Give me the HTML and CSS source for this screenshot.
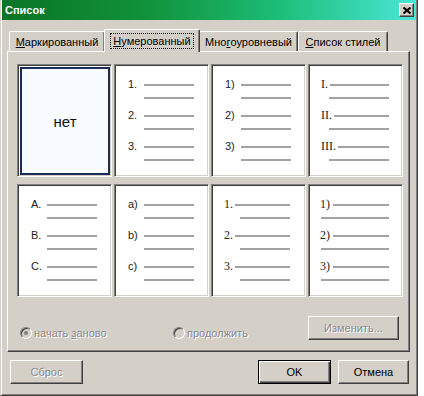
FILE: index.html
```html
<!DOCTYPE html>
<html lang="ru">
<head>
    <meta charset="UTF-8">
    <meta name="viewport" content="width=device-width, initial-scale=1.0">
    <title>Список</title>
    <link rel="stylesheet" href="styles.css">
</head>
<body>
    <div class="window">
        <div class="titlebar">
            <span class="title">Список</span>
            <span class="close">
                <svg width="8" height="7" viewBox="0 0 8 7"><path d="M0.5 0.5 L7.5 6.5 M7.5 0.5 L0.5 6.5" stroke="#000" stroke-width="2"/></svg>
            </span>
        </div>
        <div class="content">
            <div class="tabs">
                <div class="tab t1"><u>М</u>аркированный</div>
                <div class="tab t2 active"><span class="focus"><u>Н</u>умерованный</span></div>
                <div class="tab t3">Мно<u>г</u>оуровневый</div>
                <div class="tab t4"><u>С</u>писок стилей</div>
            </div>
            <div class="panel">
                <div class="grid">
                    <div class="cell selected"><div class="none">нет</div></div>

                    <div class="cell std">
                        <div class="item"><div class="row"><span class="num">1.</span><span class="line"></span></div><div class="row sub"><span class="line"></span></div></div>
                        <div class="item"><div class="row"><span class="num">2.</span><span class="line"></span></div><div class="row sub"><span class="line"></span></div></div>
                        <div class="item"><div class="row"><span class="num">3.</span><span class="line"></span></div><div class="row sub"><span class="line"></span></div></div>
                    </div>

                    <div class="cell std">
                        <div class="item"><div class="row"><span class="num">1)</span><span class="line"></span></div><div class="row sub"><span class="line"></span></div></div>
                        <div class="item"><div class="row"><span class="num">2)</span><span class="line"></span></div><div class="row sub"><span class="line"></span></div></div>
                        <div class="item"><div class="row"><span class="num">3)</span><span class="line"></span></div><div class="row sub"><span class="line"></span></div></div>
                    </div>

                    <div class="cell roman">
                        <div class="item"><div class="row"><span class="num">I.</span><span class="line"></span></div><div class="row sub"><span class="line"></span></div></div>
                        <div class="item"><div class="row"><span class="num">II.</span><span class="line"></span></div><div class="row sub"><span class="line"></span></div></div>
                        <div class="item"><div class="row"><span class="num">III.</span><span class="line"></span></div><div class="row sub"><span class="line"></span></div></div>
                    </div>

                    <div class="cell std">
                        <div class="item"><div class="row"><span class="num">A.</span><span class="line"></span></div><div class="row sub"><span class="line"></span></div></div>
                        <div class="item"><div class="row"><span class="num">B.</span><span class="line"></span></div><div class="row sub"><span class="line"></span></div></div>
                        <div class="item"><div class="row"><span class="num">C.</span><span class="line"></span></div><div class="row sub"><span class="line"></span></div></div>
                    </div>

                    <div class="cell std">
                        <div class="item"><div class="row"><span class="num">a)</span><span class="line"></span></div><div class="row sub"><span class="line"></span></div></div>
                        <div class="item"><div class="row"><span class="num">b)</span><span class="line"></span></div><div class="row sub"><span class="line"></span></div></div>
                        <div class="item"><div class="row"><span class="num">c)</span><span class="line"></span></div><div class="row sub"><span class="line"></span></div></div>
                    </div>

                    <div class="cell dotted">
                        <div class="item"><div class="row"><span class="num">1.</span><span class="line"></span></div><div class="row sub"><span class="line"></span></div></div>
                        <div class="item"><div class="row"><span class="num">2.</span><span class="line"></span></div><div class="row sub"><span class="line"></span></div></div>
                        <div class="item"><div class="row"><span class="num">3.</span><span class="line"></span></div><div class="row sub"><span class="line"></span></div></div>
                    </div>

                    <div class="cell paren">
                        <div class="item"><div class="row"><span class="num">1)</span><span class="line"></span></div><div class="row sub"><span class="line"></span></div></div>
                        <div class="item"><div class="row"><span class="num">2)</span><span class="line"></span></div><div class="row sub"><span class="line"></span></div></div>
                        <div class="item"><div class="row"><span class="num">3)</span><span class="line"></span></div><div class="row sub"><span class="line"></span></div></div>
                    </div>
                </div>
                <div class="options">
                    <label class="radio opt1"><span class="dot checked"></span><span class="off">начать <u>з</u>аново</span></label>
                    <label class="radio opt2"><span class="dot"></span><span class="off">продолжить</span></label>
                    <button class="btn change off">Изменить...</button>
                </div>
            </div>
            <div class="footer">
                <button class="btn reset off">Сброс</button>
                <button class="btn ok default">OK</button>
                <button class="btn cancel">Отмена</button>
            </div>
        </div>
    </div>
</body>
</html>
```

FILE: styles.css
```css
body {
    margin: 0;
    background: #fff;
    font-family: "Liberation Sans", Arial, sans-serif;
    font-size: 11px;
    color: #000;
}
.window {
    box-sizing: border-box;
    width: 418px;
    height: 396px;
    padding: 0 1px 1px 1px;
    background: #d4d0c8;
    border: 1px solid;
    border-top: 0;
    border-color: #d4d0c8 #404040 #404040 #d4d0c8;
    box-shadow: inset 1px 0 #fff, inset -1px -1px #808080;
}
.titlebar {
    height: 20px;
    display: flex;
    align-items: center;
    justify-content: space-between;
    padding: 0 2px 0 3px;
    background: linear-gradient(90deg, #0a7426 0%, #11923a 35%, #1bbb74 65%, #4ae6d6 100%);
}
.title {
    color: #fff;
    font-weight: bold;
    font-size: 11px;
}
.close {
    box-sizing: border-box;
    width: 15px;
    height: 14px;
    display: flex;
    align-items: center;
    justify-content: center;
    background: #d4d0c8;
    border: 1px solid;
    border-color: #fff #404040 #404040 #fff;
    box-shadow: inset -1px -1px #808080;
}
.content {
    padding: 9px 6px 0 5px;
}
.tabs {
    display: flex;
    align-items: flex-end;
    height: 22px;
    padding-left: 2px;
}
.tab {
    box-sizing: border-box;
    height: 20px;
    display: flex;
    align-items: center;
    justify-content: center;
    background: #d4d0c8;
    border: 1px solid;
    border-bottom: 0;
    border-color: #fff #404040 #fff #fff;
    border-radius: 2px 2px 0 0;
    box-shadow: inset -1px 0 #808080;
}
.t1 { width: 96px; }
.t2 { width: 96px; }
.t3 { width: 99px; }
.t4 { width: 90px; }
.tab.active {
    position: relative;
    z-index: 1;
    height: 23px;
    margin: 0 -1px -1px -1px;
}
.focus {
    outline: 1px dotted #000;
    padding: 1px 2px;
}
.panel {
    box-sizing: border-box;
    height: 301px;
    padding: 12px 0 0 9px;
    border: 1px solid;
    border-color: #fff #404040 #404040 #fff;
    box-shadow: inset -1px -1px #808080;
}
.grid {
    display: grid;
    grid-template-columns: repeat(4, 95px);
    grid-auto-rows: 113px;
    column-gap: 2px;
    row-gap: 7px;
}
.cell {
    box-sizing: border-box;
    display: flex;
    flex-direction: column;
    gap: 5px;
    padding-top: 13px;
    background: #fff;
    border: 1px solid;
    border-color: #808080 #fff #fff #808080;
    box-shadow: inset 1px 1px #404040, inset -1px -1px #d4d0c8;
}
.cell.selected {
    padding: 2px 1px 1px 2px;
    background: #fff;
}
.none {
    flex: 1;
    display: flex;
    align-items: center;
    justify-content: center;
    border: 2px solid #1c2a58;
    background: #f8fbff;
    font-size: 15px;
    color: #111;
}
.row {
    display: flex;
    align-items: center;
    height: 13px;
}
.num {
    color: #222;
    line-height: 13px;
}
.line {
    display: block;
    height: 2px;
    background: #a2a2a2;
}
.std { padding-left: 13px; }
.std .num { width: 16px; }
.std .line { width: 50px; }
.std .sub .line { margin-left: 16px; }

.roman { padding: 13px 13px 0 12px; }
.roman .num, .dotted .num, .paren .num {
    font-family: "Liberation Serif", "Times New Roman", serif;
    font-size: 12px;
}
.roman .line, .dotted .line, .paren .line { flex: 1; margin-left: 2px; }
.roman .sub .line { margin-left: 8px; }

.dotted { padding: 13px 15px 0 12px; }
.dotted .sub .line { margin-left: 16px; }

.paren { padding: 13px 13px 0 11px; }
.paren .line { margin-left: 3px; }
.paren .sub .line { margin-left: 1px; }

.options {
    display: flex;
    align-items: flex-end;
    height: 24px;
    margin-top: 19px;
    padding: 0 10px 0 3px;
}
.radio {
    display: flex;
    align-items: center;
    height: 13px;
    margin-bottom: 1px;
}
.opt1 { width: 153px; }
.dot {
    box-sizing: border-box;
    width: 12px;
    height: 12px;
    margin-right: 2px;
    border-radius: 50%;
    border: 1px solid;
    border-color: #808080 #fff #fff #808080;
    background: #d4d0c8;
    box-shadow: inset 1px 1px #404040;
    display: flex;
    align-items: center;
    justify-content: center;
}
.dot.checked::before {
    content: "";
    width: 4px;
    height: 4px;
    border-radius: 50%;
    background: #808080;
}
.off {
    color: #8a8a8a;
    text-shadow: 1px 1px 0 #fff;
}
.btn {
    box-sizing: border-box;
    height: 24px;
    padding: 0;
    font-family: "Liberation Sans", Arial, sans-serif;
    font-size: 11px;
    color: #000;
    background: #d4d0c8;
    border: 1px solid;
    border-color: #fff #404040 #404040 #fff;
    box-shadow: inset -1px -1px #808080;
}
.btn.off { color: #8a8a8a; }
.change {
    width: 91px;
    margin-left: auto;
}
.footer {
    display: flex;
    margin-top: 8px;
    padding: 0 1px 0 3px;
}
.reset { width: 73px; }
.ok {
    width: 73px;
    margin-left: auto;
}
.btn.default {
    border-color: #000;
    box-shadow: inset 1px 1px #fff, inset -1px -1px #404040, inset -2px -2px #808080;
}
.cancel {
    width: 71px;
    margin-left: 7px;
}
```
